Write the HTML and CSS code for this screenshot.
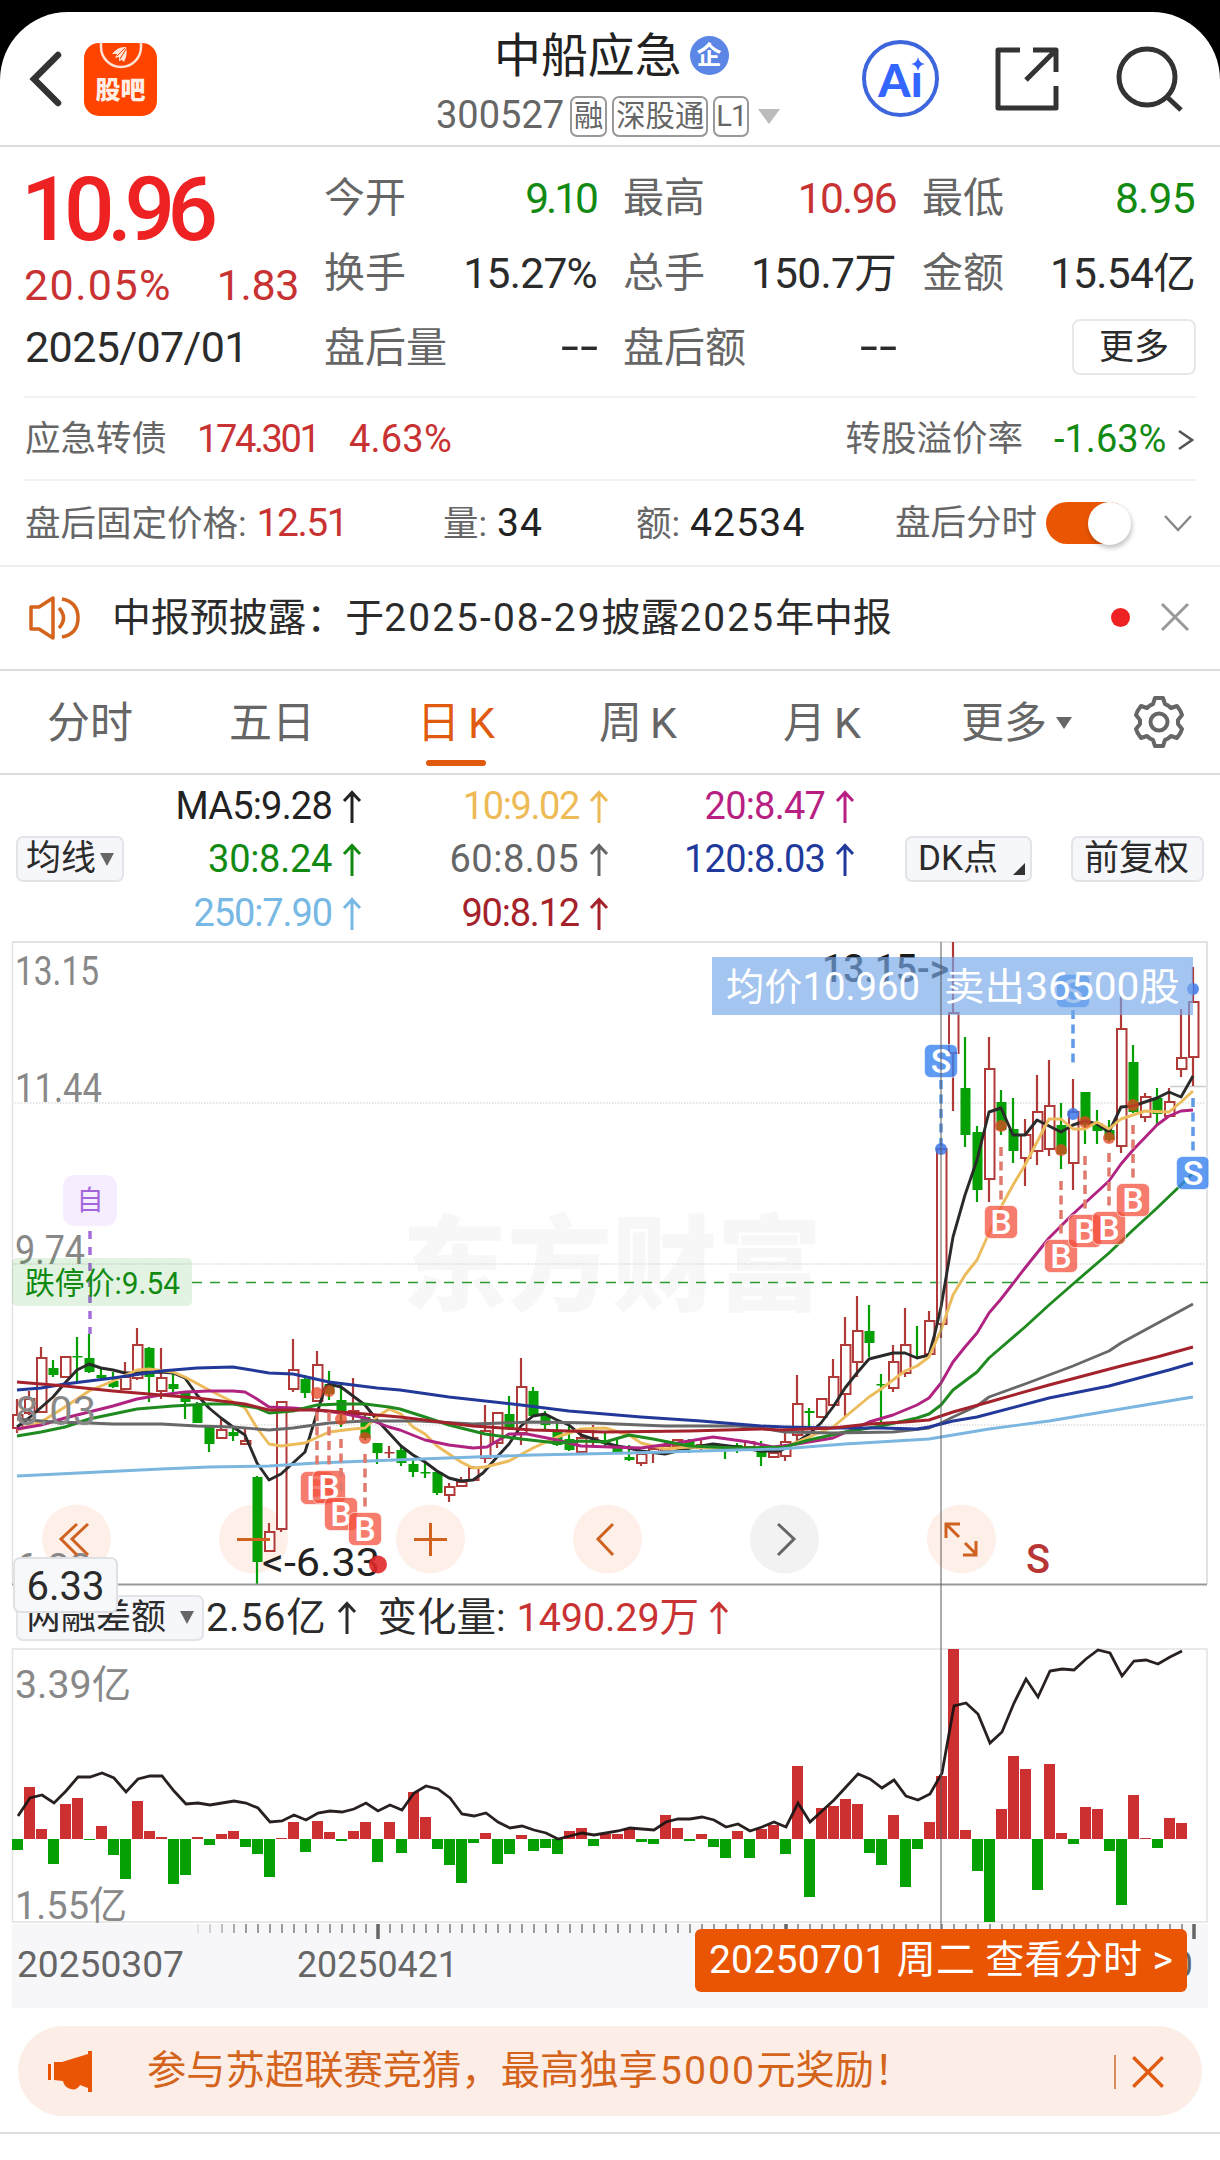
FILE: index.html
```html
<!DOCTYPE html>
<html lang="zh-CN">
<head>
  <meta charset="UTF-8">
  <title>中船应急 300527</title>
  <link rel="stylesheet" href="styles.css">
</head>
<body>
  <svg class="defs" width="0" height="0">
    <symbol id="up" viewBox="0 0 20 34">
      <path d="M10 33V3M2 11L10 2.5L18 11" fill="none" stroke="currentColor" stroke-width="3"/>
    </symbol>
    <symbol id="cross" viewBox="0 0 30 30">
      <path d="M2 2L28 28M28 2L2 28" fill="none" stroke="currentColor" stroke-width="3"/>
    </symbol>
  </svg>

  <div class="screen">
    <!-- Header -->
    <header class="header">
      <svg class="back" width="34" height="56" viewBox="0 0 34 56"><path d="M29 4L5 28L29 52" fill="none" stroke="#333" stroke-width="6.5" stroke-linecap="round"/></svg>
      <div class="guba">
        <svg width="44" height="27" viewBox="0 0 44 27">
          <path d="M2 0V4A20 20 0 0 0 42 4V0" fill="none" stroke="#ffe3d6" stroke-width="2.5"/>
          <path d="M13 11Q19 3 27 4Q29 12 25 19L23 17L20 18L20 14L16 15L18 11Z" fill="#ffe3d6"/>
          <path d="M18 13L26 5M21 16L27 6" stroke="#ff4400" stroke-width="1"/>
        </svg>
        <span>股吧</span>
      </div>
      <div class="title">
        <div class="name">中船应急<i>企</i></div>
        <div class="code"><span>300527</span><b>融</b><b>深股通</b><b class="l1">L1</b><em></em></div>
      </div>
      <div class="tools">
        <div class="ai">Aı
          <svg width="14" height="14" viewBox="0 0 14 14"><path d="M7 0Q8 6 14 7Q8 8 7 14Q6 8 0 7Q6 6 7 0Z" fill="#3366ff"/></svg>
        </div>
        <svg width="66" height="66" viewBox="0 0 66 66" fill="none" stroke="#333" stroke-width="5" stroke-linejoin="round">
          <path d="M26 4H4V62H62V40M39 4H62V26M62 4L32 34"/>
        </svg>
        <svg width="68" height="68" viewBox="0 0 68 68" fill="none" stroke="#333" stroke-width="5">
          <circle cx="31" cy="32" r="28"/><path d="M50 51L65 65"/>
        </svg>
      </div>
    </header>

    <!-- Quote -->
    <section class="quote">
      <div class="last">
        <div class="price">10.96</div>
        <div class="change"><span>20.05%</span><span>1.83</span></div>
        <div class="date">2025/07/01</div>
      </div>
      <div class="cell"><span>今开</span><b class="green tight">9.10</b></div>
      <div class="cell"><span>最高</span><b class="red">10.96</b></div>
      <div class="cell"><span>最低</span><b class="green">8.95</b></div>
      <div class="cell"><span>换手</span><b>15.27%</b></div>
      <div class="cell"><span>总手</span><b>150.7万</b></div>
      <div class="cell"><span>金额</span><b>15.54亿</b></div>
      <div class="cell"><span>盘后量</span><b class="dash">--</b></div>
      <div class="cell"><span>盘后额</span><b class="dash">--</b></div>
      <div class="cell end"><button class="more">更多</button></div>
    </section>

    <section class="bond">
      <span>应急转债</span>
      <b class="red bond-price">174.301</b>
      <b class="red bond-pct">4.63%</b>
      <span class="push">转股溢价率</span>
      <b class="green bond-rate">-1.63%</b>
      <svg width="16" height="22" viewBox="0 0 16 22"><path d="M1 2L14 11L1 20" fill="none" stroke="#555" stroke-width="2.5"/></svg>
    </section>

    <section class="fixed">
      <div class="f1">盘后固定价格: <b class="red">12.51</b></div>
      <div class="f2">量: <b>34</b></div>
      <div class="f3">额: <b>42534</b></div>
      <div class="f4">盘后分时</div>
      <div class="toggle"><i></i></div>
      <svg width="30" height="20" viewBox="0 0 30 20"><path d="M2 3L15 17L28 3" fill="none" stroke="#888" stroke-width="2.5"/></svg>
    </section>

    <section class="notice">
      <svg width="54" height="46" viewBox="0 0 54 46" fill="none" stroke="#d4631c" stroke-width="3.5" stroke-linejoin="round">
        <path d="M3 12H11L25 3V43L11 34H3Z"/><path d="M31 13Q40 23 31 33"/><path d="M34 4Q50 7 50 23T34 42"/>
      </svg>
      <p>中报预披露：于<b>2025-08-29</b>披露<b>2025</b>年中报</p>
      <i></i>
      <svg class="close" width="30" height="30"><use href="#cross"/></svg>
    </section>

    <!-- Period tabs -->
    <nav class="tabs">
      <span>分时</span>
      <span>五日</span>
      <span class="active">日K</span>
      <span>周K</span>
      <span>月K</span>
      <span>更多<em></em></span>
      <svg width="54" height="54" viewBox="0 0 54 54" fill="none" stroke="#666" stroke-width="4" stroke-linejoin="round">
        <path d="M23 3H31L33 9Q36 10 39 13L45 11Q49 16 50 20L46 25V29L50 34Q49 38 45 43L39 41Q36 44 33 45L31 51H23L21 45Q18 44 15 41L9 43Q5 38 4 34L8 29V25L4 20Q5 16 9 11L15 13Q18 10 21 9Z"/>
        <circle cx="27" cy="27" r="8.5"/>
      </svg>
    </nav>

    <!-- Moving averages -->
    <section class="ma">
      <button class="pill avg">均线<em></em></button>
      <ul>
        <li class="ma5">MA5:9.28<svg><use href="#up"/></svg></li>
        <li class="ma10">10:9.02<svg><use href="#up"/></svg></li>
        <li class="ma20">20:8.47<svg><use href="#up"/></svg></li>
        <li class="ma30">30:8.24<svg><use href="#up"/></svg></li>
        <li class="ma60">60:8.05<svg><use href="#up"/></svg></li>
        <li class="ma120">120:8.03<svg><use href="#up"/></svg></li>
        <li class="ma250">250:7.90<svg><use href="#up"/></svg></li>
        <li class="ma90">90:8.12<svg><use href="#up"/></svg></li>
      </ul>
      <button class="pill dk">DK点<em></em></button>
      <button class="pill adj">前复权</button>
    </section>

    <section class="charts">
      <svg id="kline" width="1220" height="645" viewBox="0 941 1220 645"></svg>
      <div class="indicator">
        <button class="pill">两融差额<em></em></button>
        <span class="amount">2.56亿</span><svg><use href="#up"/></svg>
        <span class="label">变化量:</span>
        <span class="red delta">1490.29万</span><svg class="red"><use href="#up"/></svg>
      </div>
      <svg id="margin" width="1220" height="275" viewBox="0 1648 1220 275"></svg>
      <svg id="axis" width="1220" height="86" viewBox="0 1923 1220 86"></svg>

      <div class="low-tag">6.33</div>
      <div class="crosshair"></div>
      <div class="day-tag">20250701 周二 查看分时 &gt;</div>
    </section>

    <!-- Promo banner -->
    <section class="promo">
      <svg width="48" height="42" viewBox="0 0 48 42" fill="#e95504">
        <path d="M2 13H5V29H2ZM8 11H16L42 3V0H46V41H42V37L34 34Q30 41 22 37Q18 35 17 30L8 29Z"/>
      </svg>
      <p>参与苏超联赛竞猜，最高独享<b>5000</b>元奖励！</p>
      <svg class="close" width="34" height="34"><use href="#cross"/></svg>
    </section>
  </div>

  <script src="chart.js"></script>
</body>
</html>
```
FILE: styles.css
```css
* {
  box-sizing: border-box;
}

body {
  display: flow-root;
  margin: 0;
  background: #000;
  font-family: Roboto, "Noto Sans CJK SC", sans-serif;
  line-height: 1.2;
  color: #2b2b2b;
}

b, i, em {
  font-weight: normal;
  font-style: normal;
}

p, ul {
  margin: 0;
  padding: 0;
}

button {
  font-family: inherit;
  color: inherit;
  padding: 0;
}

svg {
  display: block;
  flex: none;
}

.defs {
  position: absolute;
}

.screen {
  width: 1220px;
  height: 2148px;
  margin-top: 12px;
  background: #fff;
  border-radius: 68px 68px 0 0;
  overflow: hidden;
  white-space: nowrap;
}

.screen::after {
  content: "";
  display: block;
  height: 2px;
  background: #dcdcdc;
}

.red { color: #c83232; }
.green { color: #128a12; }

/* header */
.header {
  display: grid;
  grid-template-columns: 54px 296px 500px 370px;
  height: 135px;
  border-bottom: 2px solid #dcdcdc;
}

.back {
  margin: 39px 0 0 29px;
}

.guba {
  width: 73px;
  height: 73px;
  margin: 31px 0 0 30px;
  border-radius: 15px;
  background: #ff4400;
  color: #ffeee6;
  display: flex;
  flex-direction: column;
  align-items: center;
}

.guba span {
  font: 900 25px/30px "Noto Sans CJK SC", sans-serif;
  margin-top: 3px;
}

.title {
  display: flex;
  flex-direction: column;
}

.name {
  display: flex;
  align-items: center;
  height: 60px;
  margin: 14px 0 0 144px;
  font-size: 46.9px;
  color: #222;
}

.name i {
  width: 39px;
  height: 39px;
  margin: 0 0 2px 8px;
  border-radius: 50%;
  background: #5b86e5;
  color: #fff;
  font-size: 25px;
  font-weight: bold;
  line-height: 39px;
  text-align: center;
}

.code {
  display: flex;
  align-items: center;
  height: 42px;
  margin: 9px 0 0 86px;
  color: #666;
  font-size: 38px;
}

.code span {
  width: 134px;
  letter-spacing: 0;
}

.code b {
  height: 41px;
  margin-right: 5px;
  padding: 0 2px;
  border: 2px solid #999;
  border-radius: 7px;
  font-size: 29.3px;
  line-height: 37px;
}

.code .l1 {
  padding: 0 1px;
  letter-spacing: -1px;
}

.code em {
  margin-left: 4px;
  border: 11px solid transparent;
  border-top: 15px solid #bbb;
  border-bottom: 0;
}

.tools {
  display: flex;
  align-items: center;
  padding-left: 12px;
}

.ai {
  position: relative;
  width: 77px;
  height: 77px;
  border: 4px solid #3d66dd;
  border-radius: 50%;
  color: #3366ff;
  font: 900 46px/71px Lato, sans-serif;
  text-align: center;
}

.ai svg {
  position: absolute;
  right: 10px;
  top: 13px;
}

.tools > svg {
  margin-left: 55px;
}

.tools > svg:last-child {
  margin-left: 56px;
}

/* quote */
.quote {
  display: grid;
  grid-template-columns: repeat(4, 272px);
  grid-template-rows: repeat(3, 75px);
  column-gap: 27px;
  height: 249px;
  padding: 14px 25px 0;
}

.last {
  grid-row: span 3;
  font-size: 43px;
}

.price {
  height: 98px;
  line-height: 98px;
  color: #ee2222;
  font-size: 89px;
  font-weight: 500;
  letter-spacing: -7.5px;
  margin-left: -4px;
}

.change {
  display: flex;
  justify-content: space-between;
  margin: 0 -2px 0 -1px;
  line-height: 52px;
  color: #c83232;
  letter-spacing: 1.4px;
}

.change span:last-child {
  letter-spacing: -0.4px;
}

.date {
  line-height: 72px;
  letter-spacing: -0.6px;
}

.cell {
  display: flex;
  align-items: center;
  justify-content: space-between;
}

.cell span {
  color: #666;
  font-size: 41px;
}

.cell b {
  margin-right: -1px;
  font-size: 42.5px;
  letter-spacing: -0.7px;
}

.cell b.red {
  letter-spacing: -1.7px;
}

.cell b.tight {
  margin-right: 0;
  letter-spacing: -3px;
}

.cell b.dash {
  margin: 0 -3px 4px 0;
  font-size: 46px;
  letter-spacing: 1px;
  transform: scaleX(1.4);
  transform-origin: right;
}

.cell.end {
  justify-content: flex-end;
}

.more {
  width: 124px;
  height: 56px;
  margin: 0 -2px 3px 0;
  border: 2px solid #e8e8e8;
  border-radius: 8px;
  background: #fff;
  font-size: 35px;
  line-height: 54px;
}

/* bond row */
.bond, .fixed {
  display: flex;
  align-items: center;
  margin: 0 24px;
  padding: 0 2px 0 1px;
  border-top: 2px solid #f1f1f1;
  color: #666;
  font-size: 35.5px;
}

.bond {
  height: 83px;
  padding-top: 2px;
}

.bond b {
  font-size: 38px;
}

.bond .bond-price {
  width: 152px;
  margin-left: 30px;
  letter-spacing: -2.4px;
}

.bond .bond-pct {
  letter-spacing: 0.2px;
}

.bond .push {
  margin-left: auto;
}

.bond .bond-rate {
  width: 113px;
  margin: 0 11px 0 31px;
  letter-spacing: 0;
}

.fixed {
  height: 86px;
}

.fixed b {
  font-size: 39px;
  letter-spacing: -1.4px;
}

.fixed div b.red {
  margin-left: 1px;
}

.fixed div b:not(.red) {
  margin-left: 1px;
  color: #222;
  letter-spacing: 1.2px;
}

.f1 { width: 418px; }
.f2 { width: 193px; }
.f3 { width: 259px; }
.f4 { width: 151px; }

.toggle {
  width: 84px;
  height: 42px;
  border-radius: 21px;
  background: #ea5504;
}

.toggle i {
  display: block;
  width: 43px;
  height: 43px;
  margin-left: 42px;
  border-radius: 50%;
  background: #fff;
  box-shadow: 1px 3px 5px rgba(0, 0, 0, 0.25);
}

.fixed > svg {
  margin-left: 33px;
}

/* notice */
.notice {
  display: flex;
  align-items: center;
  height: 106px;
  padding: 0 30px 0 28px;
  border-top: 2px solid #efefef;
  border-bottom: 2px solid #dcdcdc;
}

.notice p {
  margin-left: 30px;
  font-size: 38.9px;
}

.notice p b {
  letter-spacing: 2.1px;
}

.notice i {
  width: 19px;
  height: 19px;
  margin: 0 0 2px auto;
  border-radius: 50%;
  background: #ee2222;
}

.close {
  margin-left: 30px;
  color: #999;
}

.notice .close {
  margin-bottom: 2px;
}

/* tabs */
.tabs {
  display: flex;
  align-items: center;
  height: 104px;
  padding: 3px 0 0 47px;
  border-bottom: 2px solid #dcdcdc;
  color: #666;
  font-size: 43px;
}

.tabs span {
  position: relative;
  width: 182px;
}

.tabs span:nth-child(2) { width: 188px; }
.tabs span:nth-child(4) { width: 184px; }
.tabs span:nth-child(5) { width: 178px; }
.tabs span:nth-child(6) { width: 171px; }

.tabs span:nth-child(n+3):nth-child(-n+5) {
  letter-spacing: 8px;
}

.tabs .active {
  color: #e05a10;
}

.tabs .active::after {
  content: "";
  position: absolute;
  left: 9px;
  bottom: -17px;
  width: 60px;
  height: 6px;
  border-radius: 3px;
  background: #e05a10;
}

.tabs em {
  display: inline-block;
  margin: 0 0 9px 9px;
  border: 8px solid transparent;
  border-top: 12px solid #666;
  border-bottom: 0;
}

.tabs svg {
  margin-bottom: 3px;
}

/* moving averages */
.ma {
  display: flex;
  align-items: center;
  height: 166px;
  padding: 2px 0 0 16px;
}

.pill {
  display: flex;
  align-items: center;
  height: 46px;
  padding: 0 8px;
  border: 2px solid #e2e4e8;
  border-radius: 7px;
  background: #f6f7fa;
  font-size: 35px;
  line-height: 44px;
}

.pill em {
  margin-left: 4px;
  border: 7px solid transparent;
  border-top: 13px solid #666;
  border-bottom: 0;
}

.pill.avg {
  width: 108px;
}

.pill.adj {
  width: 133px;
  padding-left: 11px;
}

.pill.dk {
  position: relative;
  width: 127px;
  margin-right: 39px;
  padding-left: 11px;
}

.dk em {
  position: absolute;
  right: 5px;
  bottom: 5px;
  border: 6px solid #333;
  border-top-color: transparent;
  border-left-color: transparent;
}

.ma ul {
  display: grid;
  grid-template-columns: 238px 247px 246px;
  grid-auto-rows: 53.5px;
  width: 731px;
  margin: 2px 50px 0 0;
  list-style: none;
  font-size: 38px;
  letter-spacing: -0.8px;
}

.ma li {
  display: flex;
  align-items: center;
  justify-content: flex-end;
}

.ma li svg, .indicator svg {
  width: 20px;
  height: 34px;
  margin-left: 10px;
}

.ma5 { color: #222; }
.ma10 { color: #edba55; letter-spacing: -1.4px; }
.ma20 { color: #b81f83; }
.ma30 { color: #128a12; letter-spacing: -0.3px; }
.ma60 { color: #666; letter-spacing: 0.5px; }
.ma90 { color: #a5222b; letter-spacing: -1.2px; }
.ma120 { color: #22399c; letter-spacing: -0.8px; }
.ma250 { color: #77b8e4; letter-spacing: -1.1px; }

/* charts */
.charts {
  position: relative;
  height: 1068px;
}

.charts text {
  font-family: Roboto, "Noto Sans CJK SC", sans-serif;
}

.indicator {
  display: flex;
  align-items: center;
  height: 62px;
  padding: 1px 0 0 16px;
  font-size: 39.5px;
}

.indicator .pill {
  width: 188px;
}

.indicator .pill em {
  margin-left: auto;
}

.indicator .amount {
  margin: 1px 0 0 2px;
  letter-spacing: 0.8px;
}

.indicator .label {
  margin: 1px 0 0 21px;
}

.indicator .delta {
  margin: 1px 0 0 11px;
  letter-spacing: -0.1px;
}

.low-tag {
  position: absolute;
  left: 13px;
  top: 616px;
  width: 105px;
  height: 56px;
  border: 2px solid #dfe1e5;
  border-radius: 7px;
  background: #f7f8fa;
  font-size: 40px;
  line-height: 55px;
  text-align: center;
}

.crosshair {
  position: absolute;
  left: 940px;
  top: 1px;
  width: 2px;
  height: 988px;
  background: rgba(90, 90, 90, 0.5);
}

.day-tag {
  position: absolute;
  left: 695px;
  top: 988px;
  width: 492px;
  height: 63px;
  border-radius: 6px;
  background: #ea5504;
  color: #fff;
  font-size: 39px;
  letter-spacing: 0.3px;
  line-height: 63px;
  text-align: center;
}

/* promo */
.promo {
  display: flex;
  align-items: center;
  height: 90px;
  margin: 17px 18px 16px;
  padding: 1px 37px 0 28px;
  border-radius: 45px;
  background: #fceee6;
  color: #d4631c;
}

.promo p {
  margin: 1px 0 0 53px;
  font-size: 39.3px;
}

.promo p b {
  margin-left: 2px;
  letter-spacing: 2px;
}

.promo .close {
  box-sizing: content-box;
  margin-left: auto;
  padding-left: 15px;
  border-left: 2px solid #d98a5c;
  color: #e05a10;
}
```
FILE: chart.js
```js
const RED = '#b03a38';
const GREEN = '#04a004';
const x = i => 17 + 12 * i;

// high, body top, body bottom, low, 1 = up / 0 = down
const candles = [
  [1399,1415,1428,1433,1],[1391,1399,1413,1415,1],[1347,1358,1412,1412,1],[1360,1368,1375,1377,0],
  [1357,1357,1377,1377,1],[1337,1356,1357,1382,0],[1334,1358,1372,1373,0],[1369,1375,1378,1379,0],
  [1372,1381,1387,1388,0],[1362,1377,1389,1390,1],[1328,1345,1378,1380,1],[1347,1348,1377,1402,0],
  [1348,1378,1391,1399,1],[1373,1384,1389,1392,0],[1391,1393,1402,1419,0],[1402,1405,1423,1423,0],
  [1427,1427,1444,1452,0],[1418,1430,1438,1438,1],[1427,1432,1436,1441,0],[1427,1441,1444,1445,1],
  [1476,1477,1562,1585,0],[1523,1532,1551,1551,1],[1401,1402,1529,1532,1],[1339,1370,1389,1392,1],
  [1375,1379,1393,1398,0],[1351,1365,1401,1401,1],[1371,1384,1394,1400,0],[1382,1400,1413,1427,0],
  [1378,1411,1415,1420,1],[1415,1417,1438,1440,0],[1443,1443,1453,1464,0],[1446,1452,1453,1458,1],
  [1445,1450,1463,1466,0],[1460,1464,1472,1477,0],[1463,1472,1473,1478,0],[1471,1472,1493,1495,0],
  [1483,1487,1495,1502,1],[1477,1482,1486,1486,1],[1466,1468,1480,1481,1],[1405,1431,1458,1463,1],
  [1412,1413,1443,1448,1],[1396,1414,1428,1430,0],[1358,1387,1433,1445,1],[1387,1391,1416,1417,0],
  [1411,1415,1425,1429,0],[1423,1431,1445,1446,0],[1425,1439,1450,1451,0],[1432,1438,1452,1453,1],
  [1425,1437,1439,1447,1],[1432,1440,1443,1446,0],[1439,1446,1452,1453,0],[1445,1457,1460,1461,0],
  [1452,1454,1463,1466,1],[1448,1449,1452,1463,1],[1440,1446,1451,1452,1],[1439,1440,1446,1450,1],
  [1439,1441,1447,1453,0],[1439,1445,1448,1450,1],[1443,1443,1448,1448,0],[1446,1448,1450,1459,0],
  [1443,1445,1447,1453,0],[1441,1442,1447,1449,1],[1441,1450,1457,1466,0],[1451,1453,1457,1458,1],
  [1433,1442,1456,1461,1],[1375,1404,1435,1443,1],[1408,1411,1413,1427,0],[1399,1399,1417,1418,1],
  [1359,1377,1405,1405,1],[1317,1345,1394,1417,1],[1296,1331,1362,1377,1],[1305,1331,1343,1357,0],
  [1374,1384,1385,1422,0],[1345,1362,1388,1392,1],[1308,1345,1373,1377,1],[1326,1356,1357,1358,0],
  [1311,1321,1354,1355,1],[1148,1149,1324,1338,1],[942,1013,1053,1111,1],[1037,1088,1135,1147,0],
  [1126,1132,1190,1202,0],[1037,1069,1179,1202,1],[1090,1102,1130,1135,0],[1098,1129,1151,1163,0],
  [1119,1135,1158,1186,1],[1075,1112,1151,1165,1],[1060,1106,1149,1156,1],[1103,1125,1154,1169,0],
  [1079,1112,1163,1190,1],[1092,1092,1125,1144,0],[1110,1123,1131,1144,0],[1120,1130,1140,1142,0],
  [995,1029,1146,1153,1],[1045,1062,1112,1113,0],[1093,1097,1117,1122,1],[1088,1098,1114,1125,0],
  [1088,1102,1116,1116,1],[1009,1058,1069,1077,1],[967,1002,1057,1086,1]
];

const averages = {
  '#2a2a2a': '17,1427 29,1418 53,1397 65,1383 77,1370 89,1364 101,1368 113,1370 125,1373 137,1373 161,1372 173,1373 185,1378 197,1395 209,1408 221,1418 233,1427 245,1435 257,1463 269,1480 281,1474 293,1463 305,1452 317,1413 325,1388 329,1384 341,1387 365,1405 377,1420 389,1433 401,1446 413,1455 425,1462 437,1471 449,1478 461,1481 473,1480 483,1473 497,1457 509,1444 521,1426 533,1416 545,1414 557,1420 569,1425 581,1435 593,1439 605,1443 617,1446 629,1448 641,1451 665,1454 689,1448 713,1444 737,1447 761,1451 780,1451 797,1442 809,1434 821,1423 833,1407 845,1388 857,1373 869,1359 881,1356 893,1353 905,1353 917,1358 929,1355 935,1333 941,1307 953,1237 965,1195 977,1160 989,1112 1001,1108 1013,1135 1025,1135 1037,1120 1061,1132 1073,1125 1085,1121 1097,1124 1109,1132 1121,1107 1133,1106 1145,1102 1157,1098 1169,1092 1181,1097 1193,1076',
  '#ecbc5c': '17,1430 41,1422 65,1407 89,1391 113,1381 137,1370 149,1369 173,1372 185,1377 209,1390 233,1402 245,1408 257,1428 269,1444 281,1446 305,1443 329,1432 353,1429 365,1428 377,1417 389,1409 401,1414 413,1427 425,1434 437,1446 461,1462 473,1468 485,1467 509,1461 533,1448 557,1437 581,1429 605,1428 629,1435 641,1443 665,1449 689,1447 713,1448 761,1449 785,1447 809,1437 833,1427 845,1417 857,1407 869,1397 881,1389 905,1371 917,1366 929,1357 941,1330 953,1295 965,1275 977,1260 989,1233 1001,1207 1013,1185 1025,1165 1037,1142 1049,1119 1061,1119 1073,1129 1085,1129 1097,1122 1109,1129 1121,1119 1145,1111 1169,1112 1181,1102 1193,1091',
  '#b02380': '17,1429 41,1425 65,1418 89,1412 113,1406 137,1399 161,1395 185,1392 209,1391 233,1391 245,1392 257,1399 269,1407 293,1408 317,1410 341,1413 365,1418 389,1427 400,1430 425,1440 449,1445 473,1448 487,1447 509,1434 527,1434 557,1440 581,1446 641,1448 677,1443 713,1437 749,1442 773,1447 797,1444 833,1438 869,1422 893,1415 917,1405 929,1398 941,1383 953,1362 965,1347 977,1333 989,1313 1001,1299 1025,1268 1049,1238 1073,1214 1097,1192 1109,1181 1121,1164 1133,1150 1157,1125 1169,1116 1181,1111 1193,1110',
  '#1f8a1f': '17,1436 41,1432 65,1427 89,1419 113,1414 137,1409 173,1406 209,1404 233,1404 257,1408 269,1413 293,1411 317,1405 341,1404 365,1404 389,1407 400,1409 425,1417 449,1425 485,1434 521,1439 557,1443 581,1441 605,1442 629,1435 653,1439 689,1446 737,1448 785,1447 809,1440 845,1432 881,1426 917,1418 929,1414 941,1405 953,1390 977,1372 989,1358 1025,1327 1049,1305 1073,1284 1109,1253 1133,1230 1157,1208 1181,1185 1193,1173',
  '#686868': '17,1419 53,1422 89,1423 113,1424 161,1424 197,1426 233,1427 269,1430 293,1428 329,1423 365,1421 420,1421 473,1424 533,1422 593,1423 665,1426 737,1426 761,1428 785,1432 833,1433 893,1432 929,1428 941,1423 953,1417 977,1406 989,1397 1025,1384 1073,1366 1109,1351 1121,1343 1169,1317 1193,1304',
  '#22399a': '17,1390 41,1388 65,1384 113,1378 161,1371 197,1368 233,1367 269,1373 293,1374 329,1382 377,1388 400,1390 449,1397 521,1405 569,1411 641,1417 701,1421 761,1426 785,1427 833,1428 881,1428 917,1429 929,1427 953,1421 977,1417 1049,1398 1109,1386 1169,1370 1193,1363',
  '#a3222c': '17,1382 65,1386 113,1391 161,1395 197,1398 245,1404 269,1410 317,1410 365,1414 400,1417 473,1426 533,1430 605,1432 689,1431 761,1429 780,1430 833,1428 869,1424 905,1422 929,1420 941,1416 953,1412 989,1402 1049,1385 1121,1366 1157,1357 1193,1347',
  '#7ab6df': '17,1476 161,1469 209,1467 269,1466 317,1463 420,1459 533,1455 629,1453 737,1450 780,1449 845,1444 929,1439 989,1429 1049,1421 1109,1411 1157,1403 1193,1397'
};

// type, x, badge y, dot y, dash start, dash end
const trades = [
  ['B',317,1488,1393,1412,1468],['B',329,1487,1391,1412,1468],['B',341,1514,1419,1439,1495],
  ['B',365,1529,1438,1454,1510],['B',1001,1222,1126,1147,1203],['B',1061,1256,1150,1181,1237],
  ['B',1085,1231,1122,1156,1212],['B',1109,1228,1138,1153,1209],['B',1133,1200,1105,1125,1181],
  ['S',941,1061,1149,1080,1146],['S',1073,991,1114,1010,1066],['S',1193,1173,989,1098,1155]
];

const flows = [-11,52,10,-25,35,41,-1,13,-16,-40,38,8,2,-45,-36,2,-6,5,8,-8,-15,-38,1,17,-13,18,7,-2,8,17,-23,17,-14,47,22,-10,-26,-44,-4,6,-25,-15,4,-12,-9,-15,8,11,-7,5,5,10,-3,-5,24,11,-2,5,-8,-19,8,-19,10,14,-15,73,-58,31,33,40,35,-14,-26,24,-48,-10,17,63,190,9,-32,-83,30,83,70,-51,75,6,-5,32,30,-12,-66,44,1,-9,21,16];

const balance = [1816,1798,1795,1803,1791,1777,1777,1773,1778,1792,1779,1776,1776,1791,1804,1803,1805,1803,1801,1803,1808,1822,1821,1815,1820,1813,1811,1812,1809,1803,1811,1805,1810,1793,1786,1789,1798,1814,1816,1813,1822,1828,1826,1830,1833,1839,1836,1833,1835,1833,1831,1828,1829,1830,1822,1819,1819,1817,1820,1827,1824,1831,1827,1822,1827,1803,1822,1811,1800,1787,1774,1779,1788,1780,1796,1800,1794,1773,1706,1703,1714,1743,1732,1703,1679,1697,1671,1669,1670,1659,1650,1653,1676,1661,1660,1664,1657,1651];

function text(x, y, size, fill, value, length, extra = '') {
  const fit = length ? `textLength="${length}" lengthAdjust="spacingAndGlyphs"` : '';
  return `<text x="${x}" y="${y}" font-size="${size}" fill="${fill}" ${fit} ${extra}>${value}</text>`;
}

function line(x1, y1, x2, y2, color, width, dash = '') {
  return `<line x1="${x1}" y1="${y1}" x2="${x2}" y2="${y2}" stroke="${color}" stroke-width="${width}" stroke-dasharray="${dash}"/>`;
}

function drawKline() {
  let s = text(402, 1303, 104, '#f7f7f7', '东方财富', 420, 'font-weight="900"');
  [1103, 1264, 1425].forEach(y => s += line(12, y, 1207, y, '#ddd', 1.5, '1.5 1.5'));
  s += line(1170, 1086.5, 1207, 1086.5, '#ccc', 1.5);
  s += line(12.5, 942, 12.5, 1584, '#e2e2e2', 1.5) + line(1207, 942, 1207, 1584, '#e2e2e2', 2);
  s += line(12, 942, 1208, 942, '#e2e2e2', 2);

  // floating controls, icons go on top later
  const icons = [
    'M77 1524L61 1539L77 1555M88 1524L72 1539L88 1555',
    'M237 1539.5H270',
    'M414 1539.5H447M430.5 1523V1556',
    'M613 1524L598 1539L613 1555',
    'M778 1524L794 1539L778 1555',
    'M959 1537L946 1524M946 1538V1524H960M965 1543L976 1554M976 1541V1555H963'
  ];
  icons.forEach((d, i) => {
    s += `<circle cx="${76.5 + 177 * i}" cy="1539" r="34.5" fill="${i === 4 ? '#f2f2f2' : '#fef0e9'}"/>`;
  });

  s += line(90, 1231, 90, 1334, '#a56ddc', 3.5, '8 8');
  s += line(192, 1282.5, 1208, 1282.5, '#2f9a2f', 1.5, '10 8');

  candles.forEach(([high, top, bottom, low, up], i) => {
    const cx = x(i);
    const c = up ? RED : GREEN;
    s += line(cx, high, cx, top, c, 2.2) + line(cx, bottom, cx, low, c, 2.2);
    if (up && bottom - top > 2) {
      s += `<rect x="${cx - 4}" y="${top}" width="9.5" height="${bottom - top}" fill="#fff" fill-opacity="0.7" stroke="${c}" stroke-width="2"/>`;
    } else {
      s += `<rect x="${cx - 4.5}" y="${top}" width="10" height="${Math.max(bottom - top, 1.5)}" fill="${c}"/>`;
    }
  });

  for (const color in averages) {
    s += `<polyline points="${averages[color]}" fill="none" stroke="${color}" stroke-width="2.9" stroke-linejoin="round"/>`;
  }

  // price scale
  s += text(15, 985, 40, '#888', '13.15', 84) + text(15, 1102, 40, '#888', '11.44', 87);
  s += text(15, 1264, 40, '#888', '9.74', 70) + text(15, 1425, 40, '#888', '8.03', 81);
  s += text(15, 1582, 40, '#888', '6.33', 77);

  s += '<rect x="12" y="1258" width="180" height="48" rx="5" fill="rgba(20,160,20,0.12)"/>';
  s += text(25, 1294, 31, '#128a12', '跌停价:9.54', 155);
  s += '<rect x="63" y="1175" width="54" height="51" rx="11" fill="#f6eeff"/>';
  s += text(76.5, 1210, 27, '#a365dc', '自');

  trades.forEach(([type, cx, by, dot, from, to]) => {
    const buy = type === 'B';
    s += line(cx, from, cx, to, buy ? '#df7a6c' : '#5f9be6', 3.5, '9 5.5');
    s += `<circle cx="${cx}" cy="${dot}" r="6" fill="${buy ? 'rgba(230,70,35,0.75)' : 'rgba(60,120,235,0.85)'}"/>`;
    s += `<rect x="${cx - 16.5}" y="${by - 16.5}" width="33" height="33" rx="6" fill="${buy ? 'rgba(243,80,60,0.75)' : 'rgba(55,130,240,0.8)'}" stroke="#fff" stroke-opacity="0.6" stroke-width="1"/>`;
    s += text(cx, by + 12, 34, '#fff', type, 0, 'font-weight="500" text-anchor="middle"');
  });
  s += '<rect x="1208.5" y="1150" width="12" height="46" fill="#fff"/>';

  // high and low marks
  s += text(822, 982, 39, '#1a1a1a', '13.15-&gt;', 127, 'font-weight="500"');
  s += text(262, 1576, 39, '#222', '&lt;-6.33', 118);
  s += '<circle cx="378" cy="1564.5" r="9" fill="#e02828" fill-opacity="0.9"/>';

  s += '<rect x="712" y="957" width="481" height="58" fill="rgba(120,170,233,0.68)"/>';
  s += text(726, 1000, 38, '#fff', '均价10.960', 194) + text(944, 1000, 38, '#fff', '卖出36500股', 236);

  icons.forEach((d, i) => {
    s += `<path d="${d}" fill="none" stroke="${i === 4 ? '#666' : '#cf6220'}" stroke-width="3"/>`;
  });
  s += text(1026, 1573, 40, '#b83535', 'S', 24, 'font-weight="500"');
  s += line(12, 1584.5, 1207, 1584.5, '#999', 2);
  document.getElementById('kline').innerHTML = s;
}

function drawMargin() {
  const zero = 1839;
  let s = '<rect x="12.5" y="1649" width="1194.5" height="273" fill="none" stroke="#e2e2e2" stroke-width="1.5"/>';
  s += text(15, 1698, 39, '#888', '3.39亿', 116) + text(15, 1919, 39, '#888', '1.55亿', 112);
  flows.forEach((v, i) => {
    s += `<rect x="${x(i) - 5}" y="${v > 0 ? zero - v : zero}" width="11" height="${Math.abs(v)}" fill="${v > 0 ? '#cc3030' : GREEN}"/>`;
  });
  const points = balance.map((y, i) => `${x(i) + 1},${y}`).join(' ');
  s += `<polyline points="${points}" fill="none" stroke="#1e1414" stroke-opacity="0.95" stroke-width="2.8"/>`;
  document.getElementById('margin').innerHTML = s;
}

function drawAxis() {
  let s = '<rect x="12" y="1924" width="1196" height="84" fill="#f7f7fa"/>';
  for (let i = 0; i <= 83; i++) {
    const tx = 198 + 12 * i;
    const major = i === 15 || i === 49 || i === 83;
    const shade = Math.min(1, 0.2 + i * 0.2);
    s += `<g opacity="${shade}">` + line(tx, 1924, tx, major ? 1939 : 1933, major ? '#666' : '#999', major ? 3.5 : 2) + '</g>';
  }
  s += text(17, 1977, 37, '#666', '20250307', 167) + text(297, 1977, 37, '#666', '20250421', 161);
  s += text(1028, 1977, 37, '#666', '20250710', 165);
  document.getElementById('axis').innerHTML = s;
}

drawKline();
drawMargin();
drawAxis();
```
